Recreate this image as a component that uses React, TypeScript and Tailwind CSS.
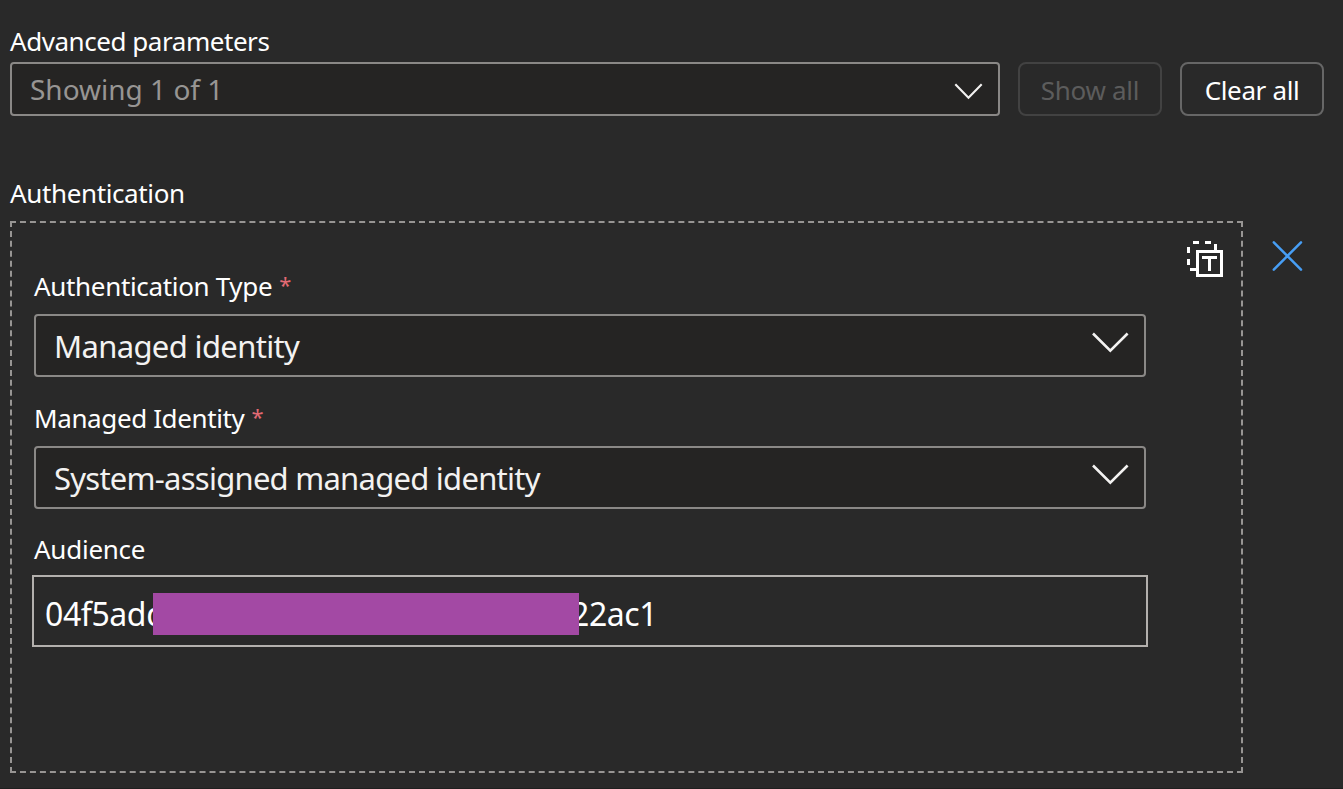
import React from "react";

function Chevron({ size }: { size: "sm" | "lg" }) {
  return size === "sm" ? (
    <svg className="mr-[15px] mt-[4px] h-[17px] w-[29px] shrink-0" viewBox="0 0 29 17" fill="none" stroke="#f3f2f1" strokeWidth="2.1">
      <path d="M1.3 1.3 14.5 14.7 27.7 1.3" />
    </svg>
  ) : (
    <svg className="mr-[15px] -mt-[6px] h-[21px] w-[38px] shrink-0" viewBox="0 0 38 21" fill="none" stroke="#f3f2f1" strokeWidth="2.6">
      <path d="M2 1.5 19.3 18.6 36.6 1.5" />
    </svg>
  );
}

function FieldLabel({ text, spacing, required = false }: { text: string; spacing: string; required?: boolean }) {
  return (
    <div className="flex h-9 items-center gap-[7px] whitespace-nowrap text-[26px] leading-9 text-white">
      <span className={spacing}>{text}</span>
      {required && <span className="-mt-[4px] text-[22px] text-[#e36a74]">*</span>}
    </div>
  );
}

function Select({ value, spacing }: { value: string; spacing: string }) {
  return (
    <div className="flex h-[63px] w-[1112px] items-center justify-between rounded-[4px] border-2 border-[#8a8886] bg-[#252423] pl-[18px]">
      <span className={`whitespace-nowrap text-[31px] leading-[40px] text-[#f3f2f1] ${spacing}`}>{value}</span>
      <Chevron size="lg" />
    </div>
  );
}

function TokenModeIcon() {
  return (
    <svg className="mt-[1px] h-[38px] w-[38px]" viewBox="0 0 38 38" fill="#fff" shapeRendering="crispEdges">
      <path d="M7 1h6v3H7zM19 1h6v3h-6zM28 4h3v6h-3zM1 7h3v6H1zM1 19h3v6H1zM4 28h6v3H4z" />
      <path fillRule="evenodd" d="M10 10h27v27H10zM13 13v21h21V13z" />
      <path d="M16 16h15v3h-6v12h-3V19h-6z" />
    </svg>
  );
}

export default function App() {
  return (
    <div className="flex h-[789px] w-[1343px] flex-col overflow-hidden border-b border-[#1f1f1f] bg-[#292929] pl-[10px] pt-[23px] font-['Noto_Sans',sans-serif]">
      <FieldLabel text="Advanced parameters" spacing="tracking-[-0.45px]" />
      <div className="mt-[3px] flex gap-[18px]">
        <div className="flex h-[54px] w-[990px] items-center justify-between rounded-[4px] border-2 border-[#8a8886] bg-[#252423] pl-[18px]">
          <span className="whitespace-nowrap text-[28px] leading-9 text-[#979593]">Showing 1 of 1</span>
          <Chevron size="sm" />
        </div>
        <button className="flex h-[54px] w-[144px] items-center justify-center whitespace-nowrap rounded-[8px] border-2 border-[#424242] pt-[2px] text-[26px] tracking-[-0.3px] text-[#5c5c5c]">
          Show all
        </button>
        <button className="flex h-[54px] w-[144px] items-center justify-center whitespace-nowrap rounded-[8px] border-2 border-[#666666] pt-[2px] text-[26px] tracking-[-0.35px] text-white">
          Clear all
        </button>
      </div>
      <div className="mt-[59px]">
        <FieldLabel text="Authentication" spacing="tracking-[-0.37px]" />
      </div>
      <div className="mt-[10px] flex">
        <div className="flex h-[552px] w-[1233px] justify-between border-2 border-dashed border-[#979593] pl-[22px] pt-[16px]">
          <div className="flex flex-col pt-[29px]">
            <FieldLabel text="Authentication Type" spacing="tracking-[-0.33px]" required />
            <div className="mb-[23px] mt-[10px]">
              <Select value="Managed identity" spacing="tracking-[-0.65px]" />
            </div>
            <FieldLabel text="Managed Identity" spacing="tracking-[-0.38px]" required />
            <div className="mb-[22px] mt-[10px]">
              <Select value="System-assigned managed identity" spacing="tracking-[-0.75px]" />
            </div>
            <FieldLabel text="Audience" spacing="tracking-[-0.25px]" />
            <div className="-ml-[2px] mt-[8px] flex h-[72px] w-[1116px] items-center whitespace-nowrap border-2 border-[#b3b0ad] pl-[11px] pt-[6px] text-[32px] leading-[42px] tracking-[-0.4px] text-white">
              <span className="w-[108px] shrink-0">04f5add</span>
              <span className="z-10 h-[42px] w-[426px] shrink-0 bg-[#a349a4]" />
              <span className="-ml-[8px]">22ac1</span>
            </div>
          </div>
          <div className="pr-[17px]">
            <TokenModeIcon />
          </div>
        </div>
        <svg className="ml-[28px] mt-[19px] h-[32px] w-[32px]" viewBox="0 0 32 32" fill="none" stroke="#479ef5" strokeWidth="2.5" strokeLinecap="round">
          <path d="M2.8 2.3 30 29.7M30 2.3 2.8 29.7" />
        </svg>
      </div>
    </div>
  );
}
